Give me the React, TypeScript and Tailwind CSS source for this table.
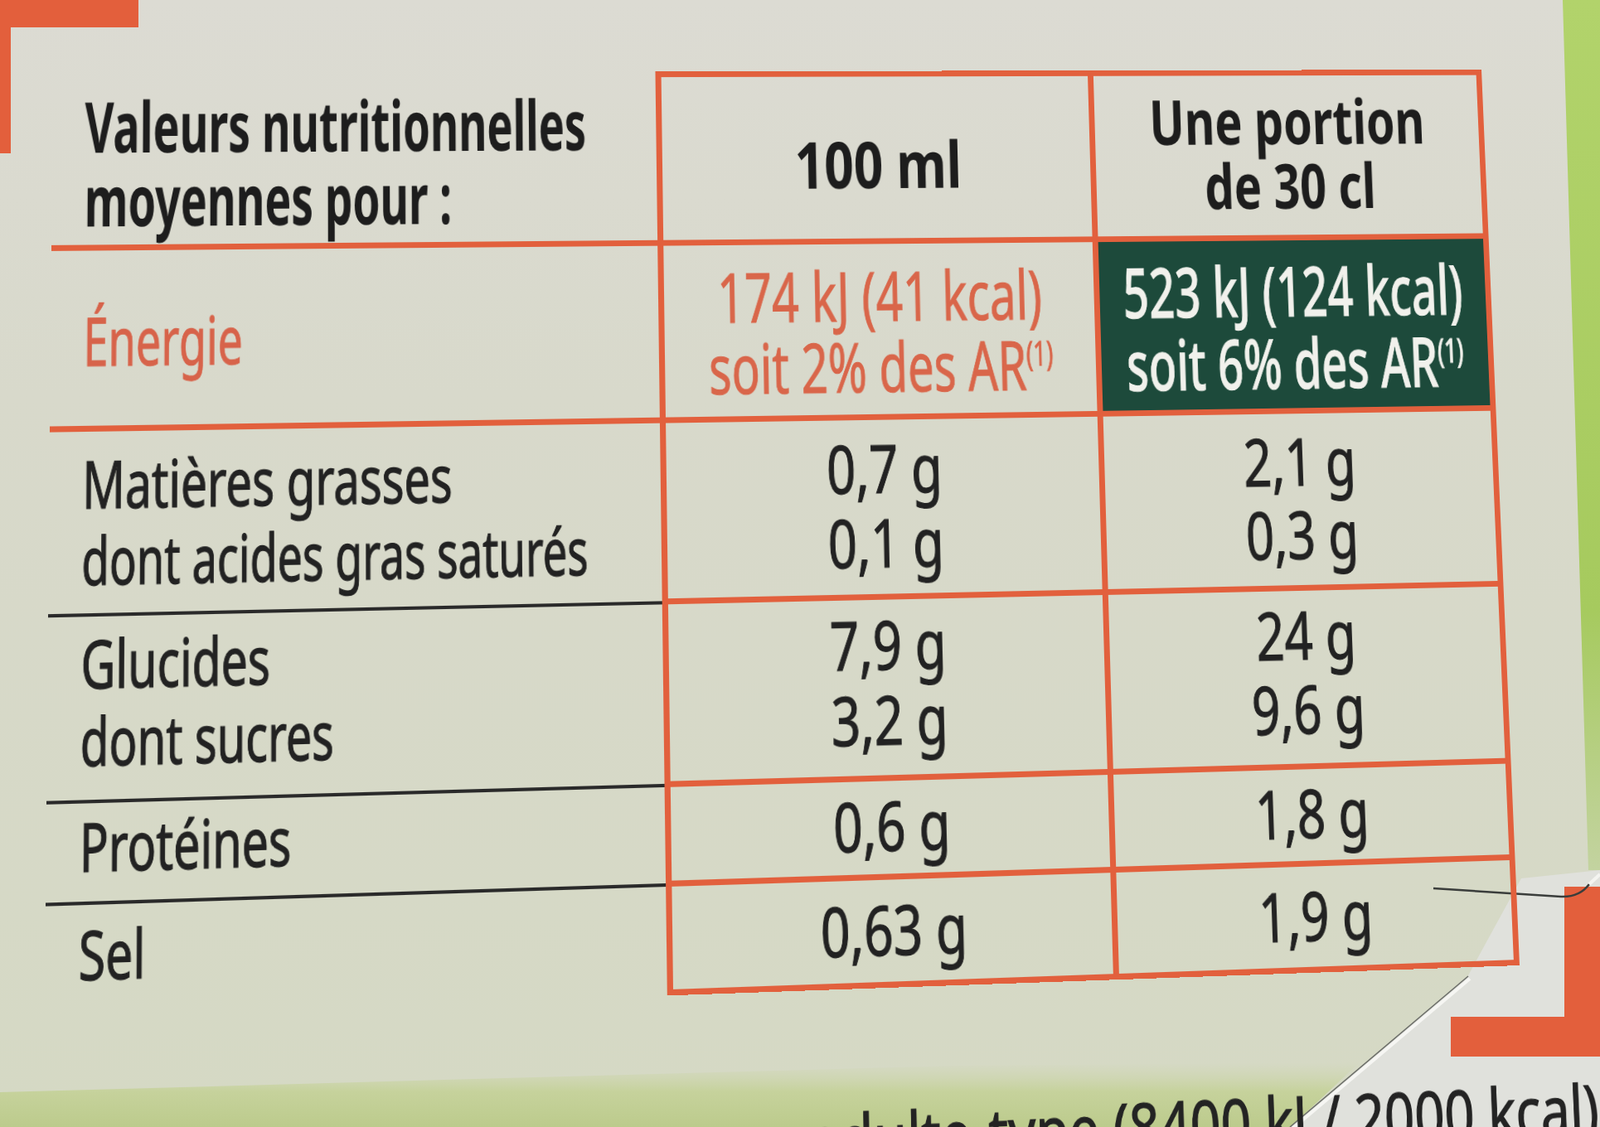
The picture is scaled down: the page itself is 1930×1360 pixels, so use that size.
import React from "react";

const face = "font-['Noto_Sans','Liberation_Sans',sans-serif]";
const orange = "border-[#e2603d]";

type Label = { t: string; s: string };

type Nutrient = {
  row: string;
  labelPad: string;
  valPad: string;
  lead: string;
  labels: Label[];
  per100: string[];
  portion: string[];
  last?: boolean;
};

const nutrients: Nutrient[] = [
  {
    row: "h-[218px]",
    labelPad: "pt-[16px]",
    valPad: "pt-[13px]",
    lead: "leading-[90px]",
    labels: [
      { t: "Matières grasses", s: "scale-x-[0.69]" },
      { t: "dont acides gras saturés", s: "scale-x-[0.655]" },
    ],
    per100: ["0,7 g", "0,1 g"],
    portion: ["2,1 g", "0,3 g"],
  },
  {
    row: "h-[217px]",
    labelPad: "pt-[9px]",
    valPad: "pt-[8px]",
    lead: "leading-[90px]",
    labels: [
      { t: "Glucides", s: "scale-x-[0.69]" },
      { t: "dont sucres", s: "scale-x-[0.675]" },
    ],
    per100: ["7,9 g", "3,2 g"],
    portion: ["24 g", "9,6 g"],
  },
  {
    row: "h-[117px]",
    labelPad: "pt-[9px]",
    valPad: "pt-[12px]",
    lead: "leading-[80px]",
    labels: [{ t: "Protéines", s: "scale-x-[0.69]" }],
    per100: ["0,6 g"],
    portion: ["1,8 g"],
  },
  {
    row: "h-[127px]",
    labelPad: "pt-[16px]",
    valPad: "pt-[18px]",
    lead: "leading-[80px]",
    labels: [{ t: "Sel", s: "scale-x-[0.7]" }],
    per100: ["0,63 g"],
    portion: ["1,9 g"],
    last: true,
  },
];

// no condensed face is installed, so the wide sans is narrowed per line
function Line({ className, children }: { className: string; children: React.ReactNode }) {
  return <span className={`inline-block whitespace-nowrap ${className}`}>{children}</span>;
}

function Decor() {
  return (
    <svg className="absolute inset-0" width="1930" height="1360" viewBox="0 0 1930 1360">
      <defs>
        <linearGradient id="strip" x1="0" y1="0" x2="0" y2="1">
          <stop offset="0" stopColor="#b2d36b" />
          <stop offset="0.7" stopColor="#a6ca5e" />
          <stop offset="1" stopColor="#c3d3a0" />
        </linearGradient>
        <linearGradient id="band" x1="0" y1="0" x2="0" y2="1">
          <stop offset="0" stopColor="#cdd6ad" stopOpacity="0" />
          <stop offset="0.45" stopColor="#c6d29c" />
          <stop offset="1" stopColor="#bccb8c" />
        </linearGradient>
      </defs>

      {/* light folded corner */}
      <polygon points="1770,1179 1835,1060 1930,1050 1930,1360 1557,1360" fill="#e0e1dc" />
      {/* green footer band */}
      <polygon points="0,1318 1150,1286 1640,1282 1557,1360 0,1360" fill="url(#band)" />
      {/* green right edge */}
      <polygon points="1885,0 1930,0 1930,1050 1916,1050" fill="url(#strip)" />

      {/* orange corners */}
      <rect x="0" y="0" width="167" height="33" fill="#e35f3c" />
      <rect x="0" y="0" width="13" height="185" fill="#e35f3c" />
      <rect x="1887" y="1070" width="43" height="205" fill="#e35f3c" />
      <rect x="1750" y="1227" width="180" height="48" fill="#e35f3c" />

      {/* creases */}
      <path d="M1729 1072 L1883 1082 Q1905 1083 1917 1067" stroke="#3a3d3b" strokeWidth="2.5" fill="none" />
      <path d="M1917 1067 L1930 1055" stroke="#f4f4f0" strokeWidth="4" fill="none" />
      <line x1="1771" y1="1178" x2="1556" y2="1360" stroke="#6b6d68" strokeWidth="1.5" />
      <line x1="1773" y1="1181" x2="1559" y2="1362" stroke="#f6f6f3" strokeWidth="4" />
    </svg>
  );
}

export default function App() {
  return (
    <div className="relative h-[1360px] w-[1930px] overflow-hidden bg-[linear-gradient(180deg,#dcdbd3_0%,#d8d9cb_35%,#d5d9c4_100%)]">
      <Decor />

      <div className="relative pl-[64px] pt-[88px]">
        {/* flat table, put in the photo's perspective by one matrix */}
        <div
          className={`w-[1723px] origin-top-left [transform:matrix3d(1.052664,-0.0024438,0,0.0000305659,-0.0087135,0.993297,0,-0.0000295856,0,0,1,0,0,0,0,1)] ${face} tracking-[-0.01em] text-[#222]`}
        >
          {/* header */}
          <div className="flex h-[215px]">
            <div className={`w-[705px] shrink-0 border-b-[7px] ${orange} pl-[37px] pt-[20px] text-[85px] font-bold leading-[89px] text-[#1d1d1d]`}>
              <div>
                <Line className="origin-left scale-x-[0.605]">Valeurs nutritionnelles</Line>
              </div>
              <div>
                <Line className="origin-left scale-x-[0.605]">moyennes pour :</Line>
              </div>
            </div>
            <div className={`flex w-[525px] shrink-0 flex-col items-center border-y-[7px] border-l-[7px] ${orange} pt-[68px] text-[80px] font-bold leading-[80px] text-[#1d1d1d]`}>
              <Line className="scale-x-[0.78]">100 ml</Line>
            </div>
            <div className={`flex w-[493px] shrink-0 flex-col items-center border-[7px] ${orange} pt-[17px] text-[78px] font-bold leading-[81px] text-[#1d1d1d]`}>
              <Line className="scale-x-[0.74]">Une portion</Line>
              <Line className="scale-x-[0.74]">de 30 cl</Line>
            </div>
          </div>

          {/* energy */}
          <div className="flex h-[216px]">
            <div className={`w-[705px] shrink-0 border-b-[7px] ${orange} pl-[37px] pt-[67px] text-[80px] leading-[80px] text-[#d7634a] [-webkit-text-stroke:1px_#d7634a]`}>
              <Line className="origin-left scale-x-[0.64]">Énergie</Line>
            </div>
            <div className={`flex w-[525px] shrink-0 flex-col items-center border-b-[7px] border-l-[7px] ${orange} pt-[19px] text-[84px] leading-[87px] text-[#d9664a] [-webkit-text-stroke:1px_#d9664a]`}>
              <Line className="scale-x-[0.68]">174 kJ (41 kcal)</Line>
              <Line className="scale-x-[0.67]">
                soit 2% des AR<span className="align-[30px] text-[42px] leading-none">(1)</span>
              </Line>
            </div>
            <div className={`flex w-[493px] shrink-0 flex-col items-center border-x-[7px] border-b-[7px] ${orange} bg-[#1d4a3b] pt-[17px] text-[86px] font-medium leading-[90px] text-[#f1f1ec] [-webkit-text-stroke:1px_#f1f1ec]`}>
              <Line className="scale-x-[0.65]">523 kJ (124 kcal)</Line>
              <Line className="scale-x-[0.65]">
                soit 6% des AR<span className="align-[30px] text-[42px] leading-none">(1)</span>
              </Line>
            </div>
          </div>

          {/* nutrients */}
          {nutrients.map((n) => (
            <div key={n.labels[0].t} className={`flex ${n.row} [-webkit-text-stroke:1.2px_#222]`}>
              <div
                className={`w-[705px] shrink-0 pl-[37px] text-[78px] ${n.lead} ${n.labelPad} ${
                  n.last ? "" : "border-b-4 border-[#2a2a2a]"
                }`}
              >
                {n.labels.map((l) => (
                  <div key={l.t}>
                    <Line className={`origin-left ${l.s}`}>{l.t}</Line>
                  </div>
                ))}
              </div>
              <div
                className={`flex w-[525px] shrink-0 flex-col items-center border-b-[7px] border-l-[7px] ${orange} text-[81px] ${n.lead} ${n.valPad}`}
              >
                {n.per100.map((v) => (
                  <Line key={v} className="scale-x-[0.75]">
                    {v}
                  </Line>
                ))}
              </div>
              <div
                className={`flex w-[493px] shrink-0 flex-col items-center border-x-[7px] border-b-[7px] ${orange} text-[81px] ${n.lead} ${n.valPad}`}
              >
                {n.portion.map((v) => (
                  <Line key={v} className="scale-x-[0.75]">
                    {v}
                  </Line>
                ))}
              </div>
            </div>
          ))}

          {/* footnote, mostly below the fold */}
          <div className="flex w-[1812px] justify-end pt-[133px] text-[80px] leading-[80px] text-[#232323] [-webkit-text-stroke:1.2px_#232323]">
            <Line className="origin-right scale-x-[0.8]">
              (1) AR : Apport de Référence pour un adulte-type (8400 kJ / 2000 kcal)
            </Line>
          </div>
        </div>
      </div>
    </div>
  );
}
